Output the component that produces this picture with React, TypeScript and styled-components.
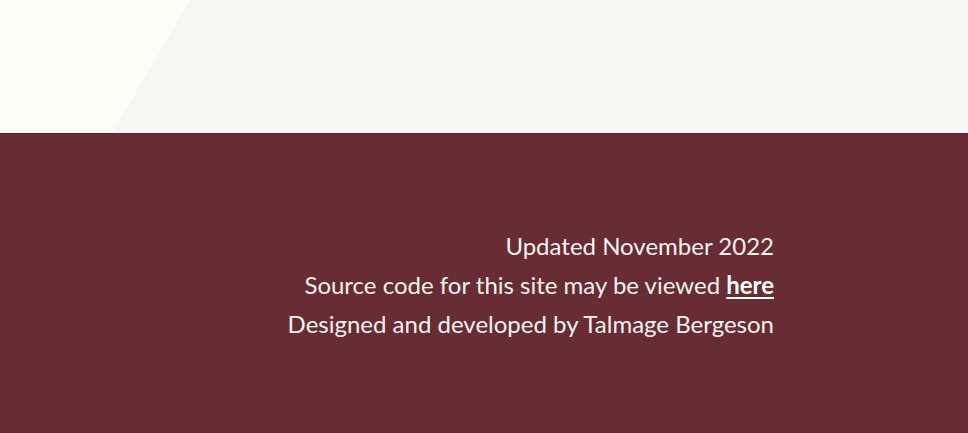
import React from 'react'
import styled, { createGlobalStyle } from 'styled-components'

const GlobalStyle = createGlobalStyle`
  html, body {
    margin: 0;
    padding: 0;
    background: #fdfdf8;
  }
  body {
    font-family: "Source Sans Pro", Lato, "Open Sans", sans-serif;
  }
`

export default function App() {
  return (
    <>
      <GlobalStyle />
      <Page>
        <Hero />
        <Footer>
          <FooterText>
            <Line>Updated November 2022</Line>
            <Line>
              Source code for this site may be viewed <Link href="#">here</Link>
            </Line>
            <Line>Designed and developed by Talmage Bergeson</Line>
          </FooterText>
        </Footer>
      </Page>
    </>
  )
}

const Page = styled.div`
  display: flex;
  flex-direction: column;
  width: 100%;
`

const Hero = styled.div`
  position: relative;
  height: 133px;
  background: #fdfdf8;
  overflow: hidden;
  &::after {
    content: '';
    position: absolute;
    inset: 0;
    background: #f6f6f2;
    clip-path: polygon(190px 0, 100% 0, 100% 100%, 112px 100%);
  }
`

const Footer = styled.footer`
  height: 300px;
  box-sizing: border-box;
  background: #672c34;
  border-top: 1px solid #55242a;
  display: flex;
  justify-content: flex-end;
  padding: 92px 194px 0 0;
`

const FooterText = styled.div`
  display: flex;
  flex-direction: column;
  align-items: flex-end;
  color: #fbf3f0;
  font-size: 24px;
  line-height: 39px;
`

const Line = styled.div`
  white-space: nowrap;
`

const Link = styled.a`
  color: #ffffff;
  font-weight: 700;
  text-decoration: underline;
  text-underline-offset: 3px;
`
